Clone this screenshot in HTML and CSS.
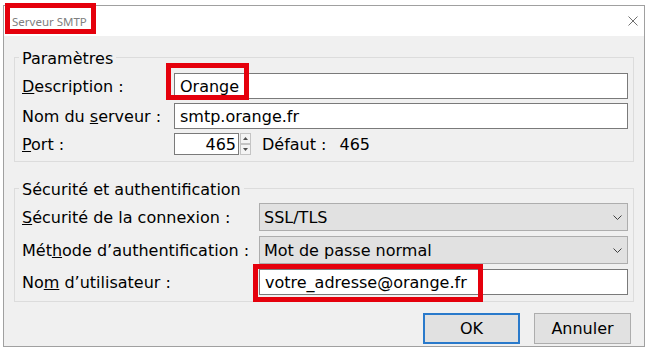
FILE: index.html
```html
<!DOCTYPE html>
<html lang="fr">
<head>
    <meta charset="UTF-8">
    <title>Serveur SMTP</title>
    <link rel="stylesheet" href="styles.css">
</head>
<body>
    <div class="dialog">
        <div class="titlebar">
            <span class="title">Serveur SMTP</span>
            <svg class="close" width="10" height="10" viewBox="0 0 10 10">
                <path d="M0.5 0.5 L9.5 9.5 M9.5 0.5 L0.5 9.5" stroke="#707070" stroke-width="1" fill="none"/>
            </svg>
        </div>
        <div class="content">
            <fieldset class="group">
                <legend>Paramètres</legend>
                <div class="form form-server">
                    <label class="lbl"><u>D</u>escription :</label>
                    <div class="field">Orange</div>
                    <label class="lbl">Nom du <u>s</u>erveur :</label>
                    <div class="field">smtp.orange.fr</div>
                    <label class="lbl lbl-port"><u>P</u>ort :</label>
                    <div class="port-row">
                        <div class="field port">465</div>
                        <svg class="spin" width="11" height="22" viewBox="0 0 11 22">
                            <rect x="0.5" y="0.5" width="10" height="10" fill="#f4f4f4" stroke="#c4c4c4"/>
                            <rect x="0.5" y="11.5" width="10" height="10" fill="#f4f4f4" stroke="#c4c4c4"/>
                            <path d="M3 7 L5.5 4 L8 7 Z" fill="#505050"/>
                            <path d="M3 15 L5.5 18 L8 15 Z" fill="#505050"/>
                        </svg>
                        <span class="default">Défaut :</span>
                        <span class="default-val">465</span>
                    </div>
                </div>
            </fieldset>

            <fieldset class="group group-auth">
                <legend>Sécurité et authentification</legend>
                <div class="form form-auth">
                    <label class="lbl"><u>S</u>écurité de la connexion :</label>
                    <div class="select">
                        <span>SSL/TLS</span>
                        <svg width="9" height="5" viewBox="0 0 9 5"><path d="M0.5 0.5 L4.5 4.5 L8.5 0.5" stroke="#404040" fill="none"/></svg>
                    </div>
                    <label class="lbl">Mét<u>h</u>ode d’authentification :</label>
                    <div class="select">
                        <span>Mot de passe normal</span>
                        <svg width="9" height="5" viewBox="0 0 9 5"><path d="M0.5 0.5 L4.5 4.5 L8.5 0.5" stroke="#404040" fill="none"/></svg>
                    </div>
                    <label class="lbl">No<u>m</u> d’utilisateur :</label>
                    <div class="field">votre_adresse@orange.fr</div>
                </div>
            </fieldset>

            <div class="actions">
                <button class="btn btn-default">OK</button>
                <button class="btn">Annuler</button>
            </div>
        </div>
    </div>

    <div class="mark mark-title"></div>
    <div class="mark mark-desc"></div>
    <div class="mark mark-user"></div>
</body>
</html>
```

FILE: styles.css
```css
* {
    box-sizing: border-box;
    margin: 0;
    padding: 0;
}

body {
    position: relative;
    width: 650px;
    height: 349px;
    overflow: hidden;
    background-color: #ffffff;
    font-family: "DejaVu Sans", sans-serif;
    font-size: 16px;
    color: #000000;
}

.dialog {
    display: flex;
    flex-direction: column;
    width: 642px;
    height: 342px;
    margin: 5px 0 0 3px;
    border: 1px solid #a0a0a0;
    background-color: #f0f0f0;
}

.titlebar {
    display: flex;
    align-items: center;
    justify-content: space-between;
    height: 30px;
    padding: 0 6px 0 8px;
    background-color: #ffffff;
}

.title {
    font-family: "Noto Sans", sans-serif;
    font-size: 11.5px;
    color: #808080;
}

.content {
    display: flex;
    flex-direction: column;
    flex: 1;
    padding: 12px 10px 0;
}

.group {
    border: 1px solid #dcdcdc;
    padding: 0 5px 6px 7px;
    min-width: 0;
}

.group legend {
    padding: 3px 3px 0;
    margin-left: -3px;
    line-height: 16px;
}

.group-auth {
    margin-top: 17px;
}

.form {
    display: grid;
    align-items: center;
}

.form-server {
    grid-template-columns: 152px 1fr;
    grid-template-rows: 26px 26px 22px;
    row-gap: 4px;
    padding-top: 6px;
}

.form-auth {
    grid-template-columns: 237px 1fr;
    grid-template-rows: 28px 28px 26px;
    row-gap: 5px;
    padding-top: 5px;
}

.lbl {
    white-space: nowrap;
}

.field {
    display: flex;
    align-items: center;
    height: 100%;
    padding: 0 5px;
    background-color: #ffffff;
    border: 1px solid #7a7a7a;
    white-space: nowrap;
}

.port-row {
    display: flex;
    align-items: center;
    height: 100%;
}

.port {
    justify-content: flex-end;
    width: 65px;
    padding: 0 2px 0 0;
}

.spin {
    margin-left: 1px;
}

.default {
    margin-left: 11px;
}

.default-val {
    margin-left: 13px;
}

.select {
    display: flex;
    align-items: center;
    justify-content: space-between;
    height: 100%;
    padding: 0 5px 0 4px;
    background-color: #e1e1e1;
    border: 1px solid #adadad;
}

.actions {
    display: flex;
    justify-content: flex-end;
    gap: 14px;
    margin-top: 11px;
    padding-right: 3px;
}

.btn {
    width: 97px;
    height: 31px;
    font-family: "DejaVu Sans", sans-serif;
    font-size: 16px;
    color: #000000;
    background-color: #e1e1e1;
    border: 1px solid #adadad;
}

.btn-default {
    border: 2px solid #2a7acb;
}

/* red annotation boxes */
.mark {
    position: absolute;
    border: 5px solid #e5000c;
}

.mark-title {
    left: 5px;
    top: 3px;
    width: 91px;
    height: 31px;
}

.mark-desc {
    left: 166px;
    top: 63px;
    width: 83px;
    height: 37px;
}

.mark-user {
    left: 253px;
    top: 264px;
    width: 230px;
    height: 38px;
}
```
